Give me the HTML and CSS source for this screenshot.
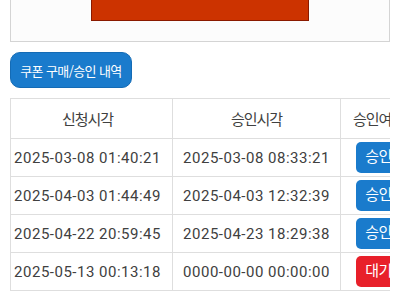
FILE: index.html
```html
<!DOCTYPE html>
<html lang="ko">
<head>
<meta charset="utf-8">
<link rel="stylesheet" href="styles.css">
</head>
<body>
<div class="page">
  <div class="banner"><div class="banner-img"></div></div>
  <button class="btn">쿠폰 구매/승인 내역</button>
  <div class="table-wrap">
    <table class="list">
      <thead>
        <tr><th class="c1">신청시각</th><th class="c2">승인시각</th><th class="c3">승인여부</th></tr>
      </thead>
      <tbody>
        <tr><td class="c1">2025-03-08 01:40:21</td><td>2025-03-08 08:33:21</td><td><span class="badge ok">승인</span></td></tr>
        <tr><td class="c1">2025-04-03 01:44:49</td><td>2025-04-03 12:32:39</td><td><span class="badge ok">승인</span></td></tr>
        <tr><td class="c1">2025-04-22 20:59:45</td><td>2025-04-23 18:29:38</td><td><span class="badge ok">승인</span></td></tr>
        <tr><td class="c1">2025-05-13 00:13:18</td><td>0000-00-00 00:00:00</td><td><span class="badge wait">대기</span></td></tr>
      </tbody>
    </table>
  </div>
</div>
</body>
</html>
```
FILE: styles.css
```css
html, body { margin: 0; padding: 0; background: #fff; }
body { font-family: "Noto Sans CJK KR", sans-serif; color: #333; }
.page { padding: 0 10px; overflow: hidden; }
.banner {
  margin-top: -40px;
  height: 80px;
  background: #fcfcfc;
  border: 1px solid #d4d4d4;
  display: flex;
  justify-content: center;
}
.banner-img {
  margin-top: 20px;
  width: 216px;
  height: 38px;
  background: #cc3300;
  border: 1px solid #8a1a00;
}
.btn {
  margin-top: 10px;
  display: block;
  width: 122px;
  height: 36px;
  padding: 0;
  background: #1a7bcc;
  color: #fff;
  border: 1px solid #146bb5;
  border-radius: 10px;
  font-family: "Noto Sans CJK KR", sans-serif;
  font-size: 13px;
  letter-spacing: -0.6px;
}
.table-wrap { margin-top: 10px; overflow: hidden; width: 380px; }
.list {
  border-collapse: collapse;
  width: 407px;
  font-family: Roboto, "Noto Sans CJK KR", sans-serif;
  font-size: 15px;
}
.list th, .list td {
  border: 1px solid #dedede;
  text-align: center;
  padding: 0 4px;
  white-space: nowrap;
  font-weight: normal;
  color: #404040;
}
.list th { letter-spacing: -1px; }
.list td { letter-spacing: 0.5px; }
.list th { height: 39px; }
.list td { height: 37px; }
.list .c1 { width: 153px; padding: 0 8px 0 0; }
.c2 { width: 159px; }
.badge {
  display: inline-block;
  color: #fff;
  font-size: 15px;
  letter-spacing: -0.5px;
  padding: 0 9px;
  height: 31px;
  line-height: 31px;
  border-radius: 5px;
}
.ok { background: #1a7bcc; }
.wait { background: #e8202a; }
```
